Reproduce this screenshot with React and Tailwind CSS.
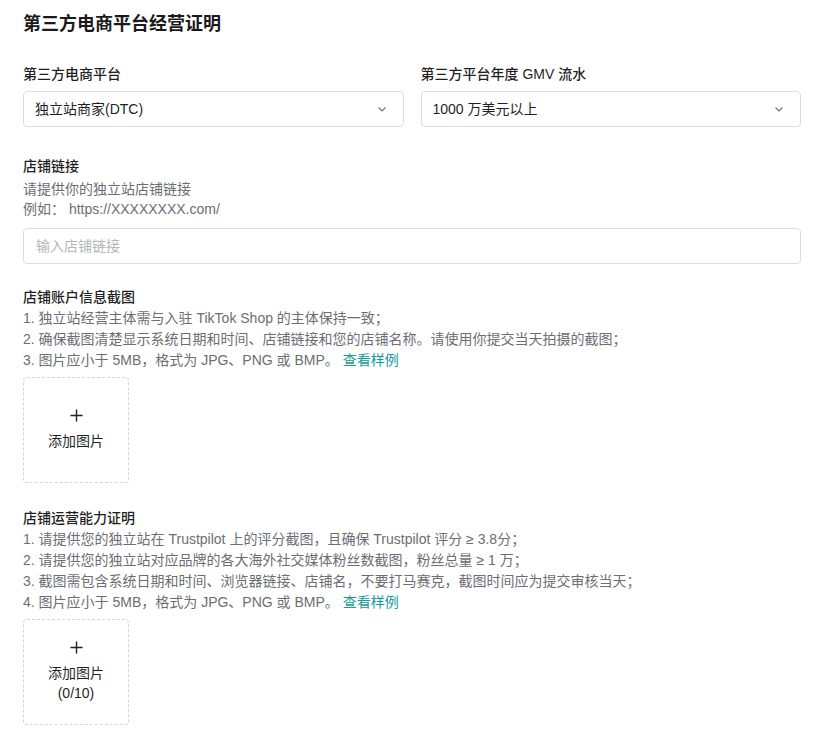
const F = { fontFamily: '"Liberation Sans", "Noto Sans CJK SC", sans-serif' };

function Chevron() {
  return (
    <svg width="12" height="12" viewBox="0 0 12 12" fill="none" stroke="#6b6f75" strokeWidth="1.1">
      <path d="M2.5 4.5 L6 8 L9.5 4.5" />
    </svg>
  );
}

function Select({ value }) {
  return (
    <div className="h-9 flex items-center justify-between px-[11px] border border-[#dcdde0] rounded-[4px] text-[14px] text-[#1f1f1f]">
      <span>{value}</span>
      <span className="mr-[4px]"><Chevron /></span>
    </div>
  );
}

function Upload({ count }) {
  return (
    <div className="w-[106px] h-[106px] border border-dashed border-[#d4d5d8] rounded-[4px] flex flex-col items-center justify-center text-[14px] text-[#1f1f1f]">
      <svg width="13" height="13" viewBox="0 0 13 13" stroke="#222" strokeWidth="1.4"><path d="M6.5 0.5V12.5M0.5 6.5H12.5" /></svg>
      <div className="mt-[9px] leading-[20px]">添加图片</div>
      {count && <div className="leading-[20px]">{count}</div>}
    </div>
  );
}

export default function App() {
  return (
    <div style={F} className="w-[819px] h-[739px] bg-white pl-[23px] pr-[18px] pt-[11px] overflow-hidden">
      <h1 className="text-[18px] font-semibold text-[#1a1a1a] leading-[26px]">第三方电商平台经营证明</h1>
      <div className="grid grid-cols-2 gap-[17px] mt-[27px]">
        <div>
          <div className="text-[14px] font-medium text-[#1f1f1f] leading-[20px] mb-[7px]">第三方电商平台</div>
          <Select value="独立站商家(DTC)" />
        </div>
        <div>
          <div className="text-[14px] font-medium text-[#1f1f1f] leading-[20px] mb-[7px]">第三方平台年度 GMV 流水</div>
          <Select value="1000 万美元以上" />
        </div>
      </div>
      <div className="mt-[29px]">
        <div className="text-[14px] font-medium text-[#1f1f1f] leading-[20px]">店铺链接</div>
        <div className="text-[14px] text-[#6b6e73] leading-[20px] mt-[3px]">请提供你的独立站店铺链接</div>
        <div className="text-[14px] text-[#6b6e73] leading-[20px]">例如： https://XXXXXXXX.com/</div>
        <div className="h-9 mt-[9px] flex items-center px-[12px] border border-[#dcdde0] rounded-[4px] text-[14px] text-[#b4b6ba]">输入店铺链接</div>
      </div>
      <div className="mt-[23px]">
        <div className="text-[14px] font-medium text-[#1f1f1f] leading-[20px]">店铺账户信息截图</div>
        <div className="text-[14px] text-[#6b6e73] leading-[21px] mt-[1px]">
          <div>1. 独立站经营主体需与入驻 TikTok Shop 的主体保持一致；</div>
          <div>2. 确保截图清楚显示系统日期和时间、店铺链接和您的店铺名称。请使用你提交当天拍摄的截图；</div>
          <div>3. 图片应小于 5MB，格式为 JPG、PNG 或 BMP。 <span className="text-[#129c97]">查看样例</span></div>
        </div>
        <div className="mt-[6px]"><Upload /></div>
      </div>
      <div className="mt-[25px]">
        <div className="text-[14px] font-medium text-[#1f1f1f] leading-[20px]">店铺运营能力证明</div>
        <div className="text-[14px] text-[#6b6e73] leading-[21px] mt-[1px]">
          <div>1. 请提供您的独立站在 Trustpilot 上的评分截图，且确保 Trustpilot 评分 ≥ 3.8分；</div>
          <div>2. 请提供您的独立站对应品牌的各大海外社交媒体粉丝数截图，粉丝总量 ≥ 1 万；</div>
          <div>3. 截图需包含系统日期和时间、浏览器链接、店铺名，不要打马赛克，截图时间应为提交审核当天；</div>
          <div>4. 图片应小于 5MB，格式为 JPG、PNG 或 BMP。 <span className="text-[#129c97]">查看样例</span></div>
        </div>
        <div className="mt-[6px]"><Upload count="(0/10)" /></div>
      </div>
    </div>
  );
}
